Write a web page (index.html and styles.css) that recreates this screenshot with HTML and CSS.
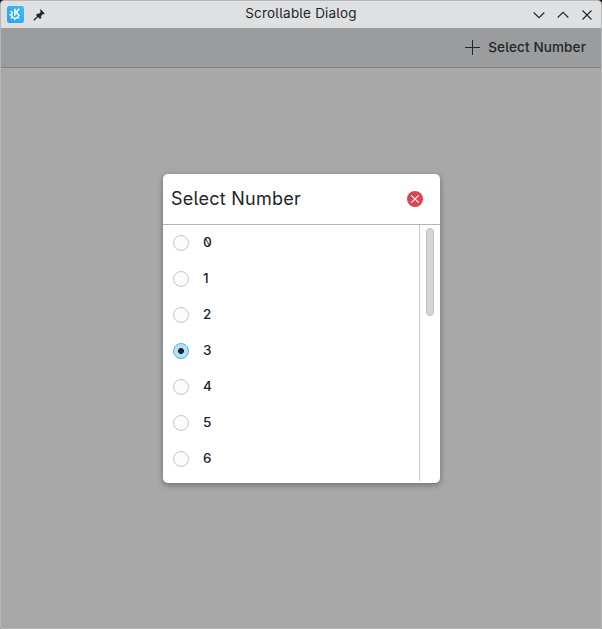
FILE: index.html
```html
<!DOCTYPE html>
<html lang="en">
<head>
<meta charset="utf-8">
<title>Scrollable Dialog</title>
<link rel="stylesheet" href="styles.css">
</head>
<body>
<div class="window">
  <header class="titlebar">
    <div class="title-left">
      <svg class="app-icon" width="17" height="17" viewBox="0 0 18 18">
        <defs><linearGradient id="blue" x1="0" y1="1" x2="1" y2="0"><stop offset="0" stop-color="#2aa3e8"/><stop offset="1" stop-color="#3fb9f6"/></linearGradient></defs>
        <rect width="18" height="18" rx="2.5" fill="url(#blue)"/>
        <path d="M5.900 6.700A3.700 3.700 0 1 0 11.900 10.900" fill="none" stroke="#fff" stroke-width="1.500"/>
        <path d="M3.900 5.300l1.300 1.200M2.600 9.300h1.700M3.900 13l1.300-1.200M8.200 13v2M11.200 12l1.400 1.300" stroke="#fff" stroke-width="1.400"/>
        <path d="M8.300 3v7.400M12.900 3L9.700 6.700l3.500 3.900" fill="none" stroke="#fff" stroke-width="1.700"/>
      </svg>
      <svg class="pin" width="12" height="12" viewBox="0 0 12 12">
        <path d="M7.6.6l3.8 3.8-.9.6-.7-.2-2 2.1.2 1.8-1 1L3.300 5.900l1-1 1.800.2L8 3.100 7.600 2z" fill="#232629" stroke="#232629" stroke-width=".6"/>
        <path d="M5 7.200L.8 11.300" stroke="#232629" stroke-width="1.200"/>
      </svg>
    </div>
    <h1 class="title">Scrollable Dialog</h1>
    <div class="controls">
      <svg width="12" height="12" viewBox="0 0 12 12"><path d="M.7 3.500L6 8.700l5.300-5.200"/></svg>
      <svg width="12" height="12" viewBox="0 0 12 12"><path d="M.7 8.500L6 3.300l5.300 5.200"/></svg>
      <svg width="12" height="12" viewBox="0 0 12 12"><path d="M1.500 1.500l9 9M10.500 1.500l-9 9"/></svg>
    </div>
  </header>
  <div class="toolbar">
    <svg width="15" height="15" viewBox="0 0 15 15"><path d="M7.500 0v15M0 7.500h15" stroke="#232629"/></svg>
    <span class="action">Select Number</span>
  </div>
  <main class="content">
    <section class="dialog">
      <div class="dialog-head">
        <h2 class="heading">Select Number</h2>
        <svg width="16" height="16" viewBox="0 0 16 16"><circle cx="8" cy="8" r="8" fill="#da4453"/><path d="M4.300 4.300l7.400 7.400M11.700 4.300l-7.400 7.400" stroke="#fff" stroke-width="1.100"/></svg>
      </div>
      <div class="dialog-body">
        <ul class="list">
          <li class="row"><span class="radio"></span><span class="number zero">0</span></li>
          <li class="row"><span class="radio"></span><span class="number">1</span></li>
          <li class="row"><span class="radio"></span><span class="number">2</span></li>
          <li class="row"><span class="radio checked"></span><span class="number">3</span></li>
          <li class="row"><span class="radio"></span><span class="number">4</span></li>
          <li class="row"><span class="radio"></span><span class="number">5</span></li>
          <li class="row"><span class="radio"></span><span class="number">6</span></li>
        </ul>
        <div class="scrollbar"><div class="thumb"></div></div>
      </div>
    </section>
  </main>
</div>
</body>
</html>
```
FILE: styles.css
```css
* { box-sizing: border-box; }
body {
  margin: 0;
  background: #000;
  color: #232629;
  font-family: Inter, "Noto Sans", sans-serif;
  font-feature-settings: "cv05";
}
h1, h2, ul { margin: 0; padding: 0; list-style: none; }
svg { display: block; flex: none; }
.window {
  width: 602px;
  height: 629px;
  display: flex;
  flex-direction: column;
  border: 1px solid #b6b7b8;
  border-radius: 4px 4px 0 0;
  background: #a8a8a8;
  overflow: hidden;
}
.titlebar {
  height: 27px;
  flex: none;
  display: grid;
  grid-template-columns: 1fr auto 1fr;
  align-items: center;
  background: #dee0e2;
}
.title-left { display: flex; align-items: center; gap: 9px; padding-left: 6px; }
.title {
  font-size: 13.5px;
  font-weight: 400;
  line-height: 20px;
  letter-spacing: .2px;
  padding-bottom: 3px;
}
.controls { display: flex; justify-content: flex-end; gap: 12px; padding-right: 8px; }
.controls path { fill: none; stroke: #232629; stroke-width: 1.1; }
.toolbar {
  height: 40px;
  flex: none;
  display: flex;
  align-items: center;
  justify-content: flex-end;
  gap: 8px;
  padding-right: 15px;
  background: #9a9c9d;
  border-bottom: 1px solid #808283;
}
.action { font-size: 13.5px; font-weight: 550; line-height: 20px; letter-spacing: .13px; padding-bottom: 2px; }
.content { flex: 1; padding: 106px 0 0 162px; }
.dialog {
  width: 277px;
  height: 309px;
  display: flex;
  flex-direction: column;
  background: #fff;
  border-radius: 5px;
  box-shadow: 0 2px 6px rgba(0, 0, 0, .35);
}
.dialog-head {
  height: 51px;
  flex: none;
  display: flex;
  align-items: center;
  justify-content: space-between;
  padding: 0 17px 0 8px;
  border-bottom: 1px solid #b4b5b6;
}
.heading { font-size: 18px; font-weight: 430; line-height: 26px; letter-spacing: .25px; }
.dialog-body { display: flex; flex: 1; padding-bottom: 2px; }
.list { flex: 1; overflow: hidden; }
.row { height: 36px; display: flex; align-items: center; gap: 14px; padding-left: 10px; }
.radio {
  width: 16px;
  height: 16px;
  border: 1px solid #c4c5c6;
  border-radius: 50%;
  background: #fcfcfc;
}
.checked {
  border-color: #4cb1e2;
  background: radial-gradient(circle, #232629 2.6px, #b5e0f6 3.3px);
}
.number { font-size: 13.5px; font-weight: 550; line-height: 20px; padding-bottom: 2px; }
.zero { font-feature-settings: "zero"; transform: scaleX(-1); }
.scrollbar { width: 21px; border-left: 1px solid #c9cacb; padding: 3px 0 0 6px; }
.thumb { width: 8px; height: 88px; border: 1px solid #bdbebe; border-radius: 4px; background: #d6d6d6; }
```
